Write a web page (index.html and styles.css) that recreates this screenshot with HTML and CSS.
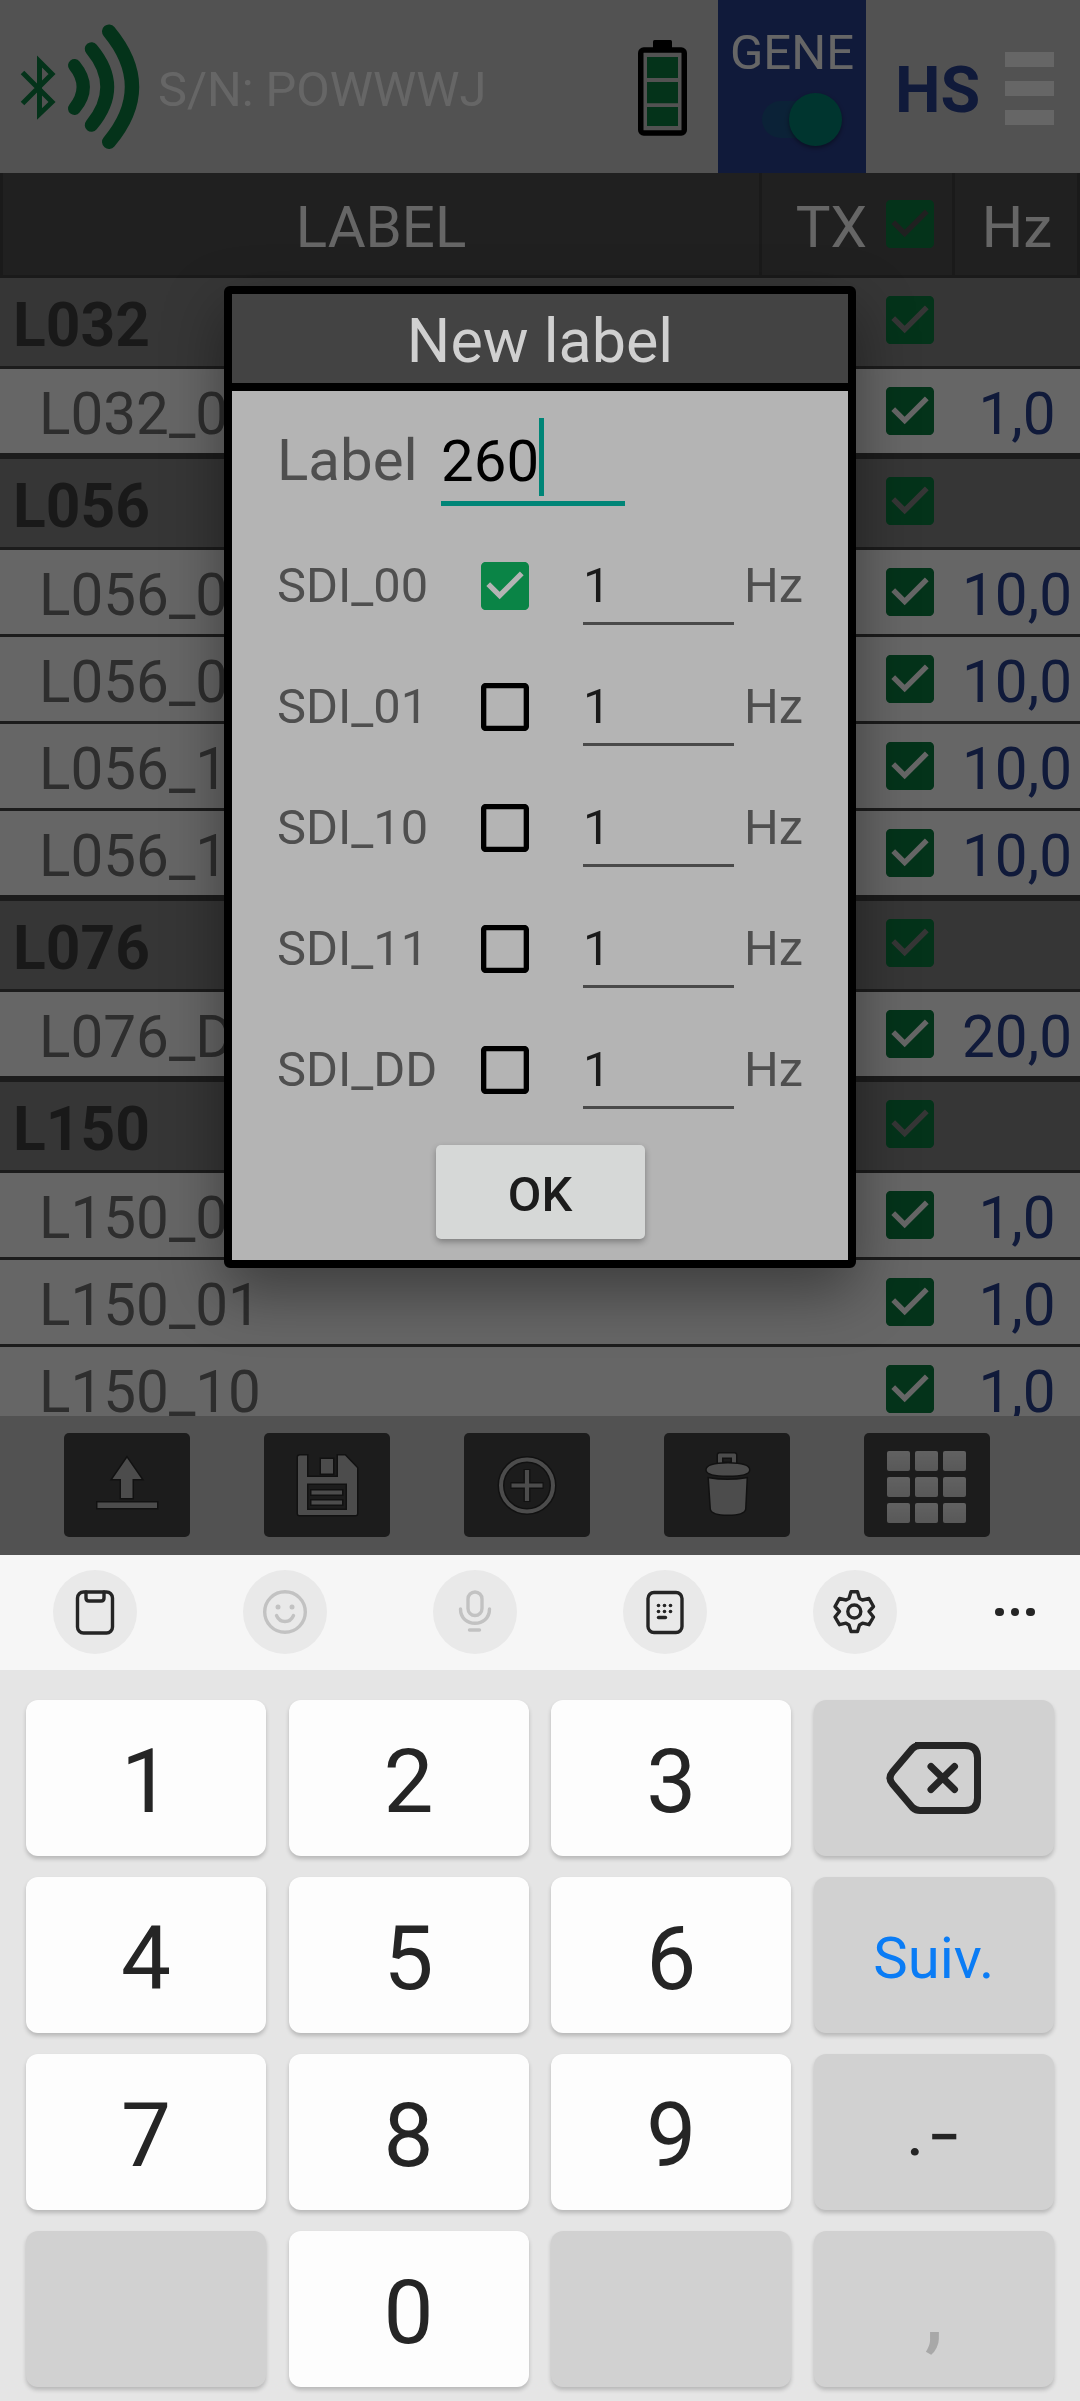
FILE: index.html
```html
<!DOCTYPE html>
<html lang="fr">
<head>
    <meta charset="UTF-8">
    <title>New label</title>
    <link rel="stylesheet" href="styles.css">
</head>
<body>
<svg class="sprite" width="0" height="0">
    <symbol id="checked" viewBox="3 3 18 18">
        <path d="M19.3 3H4.7C3.8 3 3 3.8 3 4.7v14.6c0 .9.8 1.7 1.7 1.7h14.6c.9 0 1.7-.8 1.7-1.7V4.7c0-.9-.8-1.7-1.7-1.7zM10 17l-5-5 1.41-1.41L10 14.17l7.59-7.59L19 8l-9 9z"/>
    </symbol>
    <symbol id="unchecked" viewBox="3 3 18 18">
        <path d="M19 5v14H5V5h14m.3-2H4.7C3.8 3 3 3.8 3 4.7v14.6c0 .9.8 1.7 1.7 1.7h14.6c.9 0 1.7-.8 1.7-1.7V4.7c0-.9-.8-1.7-1.7-1.7z"/>
    </symbol>
</svg>
<div class="screen">
    <div class="app">
        <header class="top_bar">
            <svg class="bluetooth" width="124" height="130" viewBox="18 22 124 130">
                <path fill="none" stroke-width="5" stroke-linejoin="miter" d="M22.500 72.500L52 102L39.500 114V61.500L52 74L22.500 103.500"/>
                <g fill="none" stroke-linecap="round">
                    <path stroke-width="13" d="M74.500 65.500Q92 87 74.500 108.500"/>
                    <path stroke-width="13.500" d="M91.500 49Q123 87 91.500 125"/>
                    <path stroke-width="14" d="M109 31.500Q155 87 109 142"/>
                </g>
            </svg>
            <div class="serial">S/N: POWWWJ</div>
            <svg class="battery" width="49" height="96" viewBox="0 0 49 96">
                <path d="M15 1.500q0-1.500 1.500-1.500h16q1.500 0 1.500 1.500V8H15z"/>
                <rect x="2.750" y="10" width="43.500" height="83" rx="3" fill="none" stroke="#000" stroke-width="5.500"/>
                <path fill="#0c8041" d="M9 17h31v21H9zM9 42h31v21.300H9zM9 67h31v19H9z"/>
            </svg>
            <div class="gene">
                <span>GENE</span>
                <div class="switch"><div class="thumb"></div></div>
            </div>
            <div class="hs">HS</div>
            <div class="menu"><i></i><i></i><i></i></div>
        </header>

        <div class="table_head">
            <div class="th">LABEL</div>
            <div class="th th_tx">TX <svg class="check"><use href="#checked"/></svg></div>
            <div class="th">Hz</div>
        </div>
        <main class="labels">
            <div class="row group"><b>L032</b><svg class="check"><use href="#checked"/></svg></div>
            <div class="row"><span>L032_00</span><svg class="check"><use href="#checked"/></svg><em>1,0</em></div>
            <div class="row group"><b>L056</b><svg class="check"><use href="#checked"/></svg></div>
            <div class="row"><span>L056_00</span><svg class="check"><use href="#checked"/></svg><em>10,0</em></div>
            <div class="row"><span>L056_01</span><svg class="check"><use href="#checked"/></svg><em>10,0</em></div>
            <div class="row"><span>L056_10</span><svg class="check"><use href="#checked"/></svg><em>10,0</em></div>
            <div class="row"><span>L056_11</span><svg class="check"><use href="#checked"/></svg><em>10,0</em></div>
            <div class="row group"><b>L076</b><svg class="check"><use href="#checked"/></svg></div>
            <div class="row"><span>L076_DD</span><svg class="check"><use href="#checked"/></svg><em>20,0</em></div>
            <div class="row group"><b>L150</b><svg class="check"><use href="#checked"/></svg></div>
            <div class="row"><span>L150_00</span><svg class="check"><use href="#checked"/></svg><em>1,0</em></div>
            <div class="row"><span>L150_01</span><svg class="check"><use href="#checked"/></svg><em>1,0</em></div>
            <div class="row"><span>L150_10</span><svg class="check"><use href="#checked"/></svg><em>1,0</em></div>
        </main>
        <footer class="actions">
            <div class="action">
                <svg width="126" height="104">
                    <path class="glyph" d="M63 25L77.500 46H68.500V65H57V46H48.500zM33.500 69.500h59.500v5.500H33.500z"/>
                </svg>
            </div>
            <div class="action">
                <svg width="126" height="104">
                    <path class="glyph" fill-rule="evenodd" d="M36 22.500h7V44h31V22.500h7L93 35v45.500q0 1.500-1.500 1.500h-56q-1.500 0-1.500-1.500V24q0-1.500 2-1.500zM43 50.500V77h40V50.500z"/>
                    <path class="glyph" d="M57 26h12v14.500H57zM47.500 57.500H78v4H47.500zM47.500 67.500H78v4H47.500z"/>
                </svg>
            </div>
            <div class="action">
                <svg width="126" height="104" fill="none">
                    <circle cx="63" cy="52.500" r="26" stroke="#2b2b2b" stroke-width="7"/>
                    <path d="M63 36v33M46.500 52.500h33" stroke="#2b2b2b" stroke-width="7"/>
                    <circle cx="63" cy="52.500" r="26" stroke="#bebebe" stroke-width="4"/>
                    <path d="M63 37v31M47.500 52.500h31" stroke="#bebebe" stroke-width="4.200"/>
                </svg>
            </div>
            <div class="action">
                <svg width="126" height="104">
                    <path class="glyph" fill-rule="evenodd" d="M54 32V22q0-1.500 1.500-1.500h15q1.500 0 1.500 1.500v10zM58 24.500V30h10v-5.500z"/>
                    <path class="glyph" d="M42.700 37Q42.700 30.500 64 30.500T85 37Q85 42.500 64 42.500T42.700 37z"/>
                    <path class="glyph" d="M45 45.500Q63 48.500 82.500 45.500L81 76Q80 81.500 64 81.500T47 76z"/>
                </svg>
            </div>
            <div class="action">
                <div class="grid"><i></i><i></i><i></i><i></i><i></i><i></i><i></i><i></i><i></i></div>
            </div>
        </footer>
        <div class="dim"></div>

        <div class="dialog">
            <div class="dialog_title">New label</div>
            <div class="label_row">
                <label>Label</label>
                <div class="label_input">260</div>
            </div>
            <div class="sdi_row">
                <label>SDI_00</label><svg class="check on"><use href="#checked"/></svg>
                <div class="freq">1</div><span>Hz</span>
            </div>
            <div class="sdi_row">
                <label>SDI_01</label><svg class="check off"><use href="#unchecked"/></svg>
                <div class="freq">1</div><span>Hz</span>
            </div>
            <div class="sdi_row">
                <label>SDI_10</label><svg class="check off"><use href="#unchecked"/></svg>
                <div class="freq">1</div><span>Hz</span>
            </div>
            <div class="sdi_row">
                <label>SDI_11</label><svg class="check off"><use href="#unchecked"/></svg>
                <div class="freq">1</div><span>Hz</span>
            </div>
            <div class="sdi_row">
                <label>SDI_DD</label><svg class="check off"><use href="#unchecked"/></svg>
                <div class="freq">1</div><span>Hz</span>
            </div>
            <button class="ok">OK</button>
        </div>
    </div>

    <div class="kb_tools">
        <div class="tool">
            <svg width="84" height="84" class="ink">
                <rect x="24.500" y="22" width="35" height="41" rx="6"/>
                <path d="M33 22v6q0 3 3 3h12q3 0 3-3v-6"/>
            </svg>
        </div>
        <div class="tool">
            <svg width="84" height="84" class="ink faded">
                <circle cx="42" cy="42" r="20.300"/>
                <path d="M33.500 45.500c3.500 8 13.500 8 17 0"/>
                <circle class="dot" cx="35" cy="37" r="2.500"/>
                <circle class="dot" cx="49" cy="37" r="2.500"/>
            </svg>
        </div>
        <div class="tool">
            <svg width="84" height="84" class="ink faded">
                <rect x="35" y="22" width="14" height="23.500" rx="7"/>
                <path d="M27.500 39c0 19 29 19 29 0M36.500 60h10"/>
            </svg>
        </div>
        <div class="tool">
            <svg width="84" height="84" class="ink">
                <rect x="25" y="22.500" width="34" height="40" rx="6"/>
                <g class="dot">
                    <circle cx="35.500" cy="35.500" r="1.800"/><circle cx="41.500" cy="35.500" r="1.800"/><circle cx="47.500" cy="35.500" r="1.800"/>
                    <circle cx="35.500" cy="41.500" r="1.800"/><circle cx="41.500" cy="41.500" r="1.800"/><circle cx="47.500" cy="41.500" r="1.800"/>
                </g>
                <path d="M35.500 47.500h7"/>
            </svg>
        </div>
        <div class="tool">
            <svg width="84" height="84" class="ink">
                <path d="M38 21.700H44.500L46.500 28.500L49.500 30L56 28.500L60.500 36.500L56 41.500L60.500 47L56 54.700L49.500 53.200L46.500 55L44.500 61.500H38L36 55L33 53.200L26.500 54.700L22 47L26.500 41.500L22 36.500L26.500 28.500L33 30L36 28.500z"/>
                <circle cx="41.300" cy="41.500" r="6.500"/>
            </svg>
        </div>
        <div class="more"><i></i><i></i><i></i></div>
    </div>
    <div class="keyboard">
        <div class="key">1</div>
        <div class="key">2</div>
        <div class="key">3</div>
        <div class="key grey">
            <svg class="backspace" width="96" height="72" viewBox="0 0 96 72">
                <path d="M29 3.500H79Q91.500 3.500 91.500 16V56Q91.500 68.500 79 68.500H34Q30 68.500 26.500 65.500L6.500 42Q1.500 36 6.500 30L26.500 6.500Q29.500 3.500 34 3.500z"/>
                <path d="M45 24.500L68.500 47.500M68.500 24.500L45 47.500"/>
            </svg>
        </div>
        <div class="key">4</div>
        <div class="key">5</div>
        <div class="key">6</div>
        <div class="key grey next">Suiv.</div>
        <div class="key">7</div>
        <div class="key">8</div>
        <div class="key">9</div>
        <div class="key grey sign">.<span>−</span></div>
        <div class="key grey"></div>
        <div class="key">0</div>
        <div class="key grey"></div>
        <div class="key grey comma">,</div>
    </div>
</div>
</body>
</html>
```
FILE: styles.css
```css
body {
    margin: 0;
    font-family: Roboto, "Noto Sans", sans-serif;
}

* {
    box-sizing: border-box;
}

svg {
    display: block;
    flex: none;
}

.sprite {
    position: absolute;
}

.screen {
    width: 1080px;
    height: 2401px;
    display: flex;
    flex-direction: column;
    overflow: hidden;
}

.app {
    position: relative;
    height: 1555px;
    display: flex;
    flex-direction: column;
    overflow: hidden;
    background: #fff;
}

.dim {
    position: absolute;
    inset: 0;
    background: rgba(0, 0, 0, 0.6);
}

/* top bar */
.top_bar {
    height: 173px;
    flex: none;
    display: flex;
    align-items: center;
    background: #cdcdcd;
}

.bluetooth {
    margin-left: 18px;
    stroke: #0c8041;
}

.serial {
    width: 477px;
    margin-left: 16px;
    padding-top: 5px;
    font-size: 48.7px;
    color: #fff;
    white-space: nowrap;
}

.battery {
    margin: 3px 31px 0 3px;
}

.gene {
    width: 148px;
    height: 173px;
    padding-top: 24px;
    display: flex;
    flex-direction: column;
    align-items: center;
    background: #2a4191;
    color: #fff;
    font-size: 49px;
    line-height: 58px;
}

.switch {
    width: 80px;
    height: 37px;
    margin: 19px 0 0 20px;
    display: flex;
    justify-content: flex-end;
    align-items: center;
    border-radius: 19px;
    background: #1d5589;
}

.thumb {
    width: 53px;
    height: 53px;
    border-radius: 50%;
    background: #008577;
    box-shadow: 0 2px 4px rgba(0, 0, 0, 0.4);
}

.hs {
    width: 139px;
    padding: 6px 0 0 29px;
    color: #2a4191;
    font-size: 64.5px;
    font-weight: bold;
}

.menu {
    display: flex;
    flex-direction: column;
    gap: 14px;
    margin-top: 4px;
}

.menu i {
    width: 49px;
    height: 15px;
    background: #fff;
}

/* label table */
.table_head {
    height: 105px;
    flex: none;
    display: grid;
    grid-template-columns: 759px 193px 122px;
    border: solid #424242;
    border-width: 0 3px 3px;
    background: #505050;
}

.th {
    display: flex;
    align-items: center;
    justify-content: center;
    padding-top: 5px;
    border-right: 3px solid #424242;
    color: #fff;
    font-size: 58.2px;
}

.table_head .th:last-child {
    border: none;
    padding-left: 2px;
}

.table_head .th_tx {
    gap: 19px;
    justify-content: flex-end;
    padding-right: 18px;
}

.check {
    width: 48px;
    height: 48px;
    fill: #0c8041;
}

.th_tx .check {
    margin-bottom: 6px;
}

.labels {
    flex: 1;
    overflow: hidden;
}

.row {
    height: 87px;
    display: grid;
    grid-template-columns: 886px 68px 126px;
    align-items: center;
    border-bottom: 3px solid #464646;
    background: #fff;
}

.row span,
.row em {
    padding-top: 5px;
    color: #737373;
    font-size: 58.4px;
    font-style: normal;
    line-height: 70px;
}

.row span {
    padding-left: 39px;
}

.row em {
    color: #2a4191;
    text-align: center;
}

.group {
    height: 94px;
    border-top: 3px solid #464646;
    background: #888;
}

.group:first-child {
    height: 91px;
    border-top: none;
}

.group b {
    padding: 6px 0 0 13px;
    color: #404040;
    font-size: 60.5px;
}

.group .check {
    margin-bottom: 4px;
}

/* action buttons */
.actions {
    height: 139px;
    flex: none;
    display: flex;
    gap: 74px;
    padding: 17px 64px;
    background: #cdcdcd;
}

.action {
    width: 126px;
    height: 104px;
    border-radius: 5px;
    background: #464646;
}

.glyph {
    fill: #bebebe;
    stroke: #2b2b2b;
    stroke-width: 3px;
    paint-order: stroke;
}

.grid {
    display: grid;
    grid-template-columns: repeat(3, 23px);
    gap: 6px 5px;
    padding: 18px 0 0 23px;
    filter: blur(0.7px);
}

.grid i {
    height: 20px;
    border-radius: 2px;
    background: linear-gradient(#f4f4f4, #dcdcdc);
}

/* dialog */
.dialog {
    position: absolute;
    left: 224px;
    top: 286px;
    width: 632px;
    height: 982px;
    display: flex;
    flex-direction: column;
    border: 8px solid #000;
    border-radius: 6px;
    background: #b4b4b4;
    box-shadow: 0 24px 60px rgba(0, 0, 0, 0.4);
}

.dialog_title {
    height: 97px;
    padding-top: 5px;
    border-bottom: 8px solid #000;
    background: #434343;
    color: #d0d0d0;
    font-size: 61px;
    line-height: 85px;
    text-align: center;
}

.label_row {
    height: 134px;
    display: flex;
    padding: 27px 0 0 45px;
    font-size: 58.2px;
    line-height: 84px;
}

.label_row label {
    width: 164px;
    color: #4f4f4f;
}

.label_input {
    width: 184px;
    height: 88px;
    border-bottom: 5px solid #008577;
    color: #000;
}

/* text cursor */
.label_input::after {
    content: "";
    display: inline-block;
    width: 5px;
    height: 78px;
    vertical-align: -15px;
    background: #008577;
}

.sdi_row {
    height: 121px;
    display: flex;
    align-items: center;
    padding-left: 45px;
    color: #4f4f4f;
    font-size: 48.8px;
}

.sdi_row label {
    width: 204px;
}

.sdi_row .on {
    fill: #0a8446;
}

.sdi_row .off {
    fill: #000;
}

.freq {
    width: 151px;
    height: 78px;
    margin: 0 10px 0 54px;
    border-bottom: 3px solid #4a4a4a;
    color: #1a1a1a;
    line-height: 77px;
}

.ok {
    width: 209px;
    height: 94px;
    margin: 15px auto 0;
    padding: 5px 0 0;
    border: none;
    border-radius: 5px;
    background: #d6d8d7;
    color: #1c1c1c;
    font-family: inherit;
    font-size: 48.8px;
    font-weight: 500;
    box-shadow: 0 3px 6px rgba(0, 0, 0, 0.3);
}

/* keyboard */
.kb_tools {
    height: 115px;
    flex: none;
    display: flex;
    gap: 106px;
    padding: 15px 0 0 53px;
    background: #f6f6f6;
}

.tool {
    width: 84px;
    height: 84px;
    border-radius: 50%;
    background: #e9e9e9;
}

.ink {
    fill: none;
    stroke: #252525;
    stroke-width: 3.4px;
    stroke-linecap: round;
    stroke-linejoin: round;
}

.ink .dot {
    fill: #252525;
    stroke: none;
}

.faded {
    stroke: #c2c2c2;
}

.faded .dot {
    fill: #c2c2c2;
}

.more {
    height: 84px;
    margin-left: -8px;
    display: flex;
    align-items: center;
    gap: 7px;
}

.more i {
    width: 8.5px;
    height: 8.5px;
    border-radius: 50%;
    background: #252525;
}

.keyboard {
    flex: 1;
    display: grid;
    grid-template-columns: repeat(4, 240px);
    grid-auto-rows: 156px;
    gap: 21px 22.600px;
    padding: 30px 26px 0;
    background: #e5e5e5;
}

.key {
    display: flex;
    align-items: center;
    justify-content: center;
    padding-top: 6px;
    border-radius: 12px;
    background: #fdfdfd;
    box-shadow: 0 3px 4px rgba(0, 0, 0, 0.2);
    color: #252525;
    font-size: 89px;
}

.grey {
    background: #d1d1d1;
    font-size: 58px;
}

.next {
    color: #0a7cf5;
}

.sign {
    font-weight: 500;
}

.sign span {
    margin: 3px 0 0 5px;
}

.comma {
    color: #a8a8a8;
    font-size: 84px;
    font-weight: 500;
}

.backspace {
    margin-top: -6px;
    fill: none;
    stroke: #252525;
    stroke-width: 7px;
    stroke-linecap: round;
}
```
